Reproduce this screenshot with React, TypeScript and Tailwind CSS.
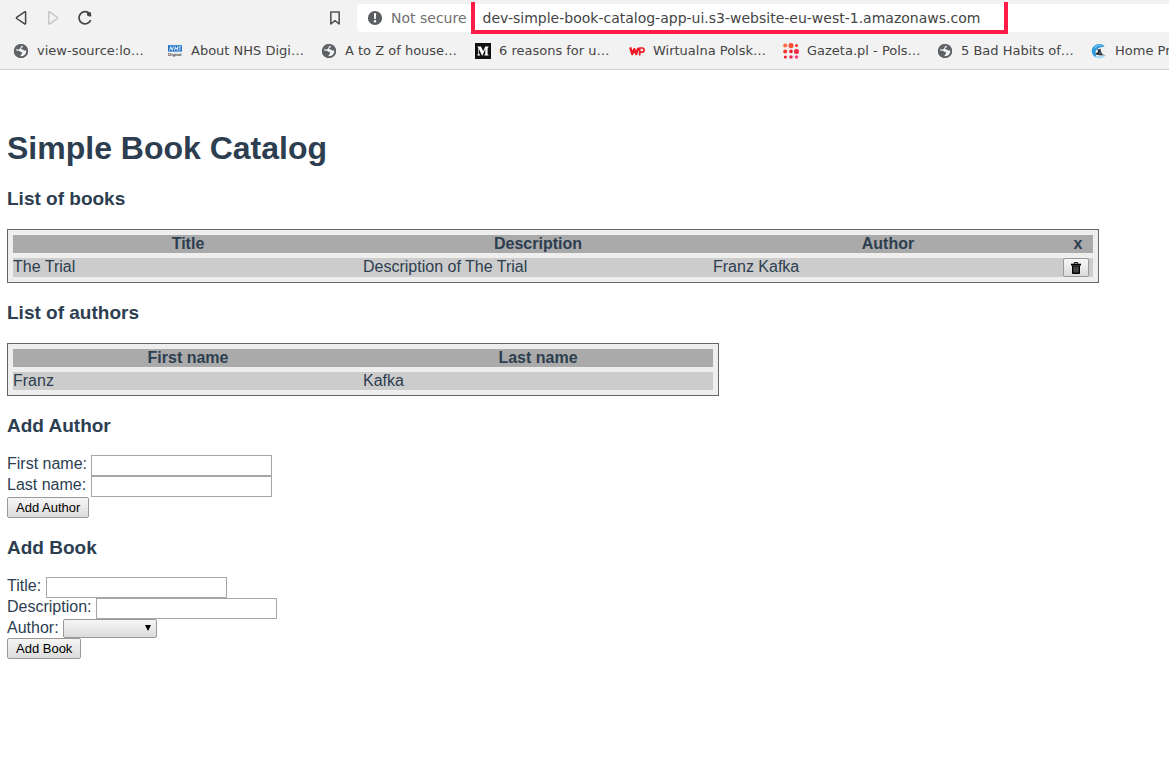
import type { ReactNode } from 'react';

function GlobeIcon() {
  return (
    <svg className="size-4 shrink-0" viewBox="0 0 16 16" aria-hidden="true">
      <circle cx="8" cy="8" r="7.1" fill="#5f6368" />
      <path
        d="M6.9 2.3 10.6 2.3C10.9 3 10 3.2 9.6 3.9 9.3 4.6 8.4 4.7 8 5.1 7.6 5.6 8.3 6.3 9.2 6.3 10.3 6.4 10.2 7.5 11.2 7.5 12.2 7.5 12.5 7 13.6 7.2 13.8 9.8 12.6 11.9 10.6 13 9.7 13.6 8.2 13.8 7.1 13.6 7 12.6 8.2 12.5 8.4 11.5 8.5 10.4 9.4 10.5 9.2 9.6 9 8.7 7.7 9 7 8.4 6.2 7.7 5.5 7.8 4.5 7.7 3.4 7.6 3.1 7.2 2.4 7.4 2.5 5 4.5 2.8 6.9 2.3Z"
        fill="#f2f2f2"
      />
      <path d="M3 5.4 5 3.2 7.4 2.6 8.4 3.2 7.1 5.2 5.7 6.4 3 6.6Z" fill="#5f6368" />
      <circle cx="8" cy="8" r="6.2" fill="none" stroke="#5f6368" strokeWidth="1.8" />
    </svg>
  );
}

function NhsIcon() {
  return (
    <svg className="size-4 shrink-0" viewBox="0 0 16 16" aria-hidden="true">
      <rect x="1" y="2.2" width="14" height="6.4" fill="#1f72c6" />
      <path d="M2.6 7.6 3.6 3.6 5.4 7.4 6.4 3.3M7.6 7.6 8.5 3.3M10 7.6 10.9 3.3M8.1 5.4H10.4M14.2 3.8C12.5 3.4 11.8 3.9 12.1 4.7 12.4 5.4 13.6 5.4 13.2 6.5 12.9 7.3 12 7.2 11.3 7" fill="none" stroke="#fff" strokeWidth=".9" />
      <text x="1" y="13" fontSize="4.4" fontWeight="700" fontFamily="Liberation Sans, sans-serif" fill="#444">Digital</text>
    </svg>
  );
}

function MediumIcon() {
  return (
    <svg className="size-4 shrink-0" viewBox="0 0 16 16" aria-hidden="true">
      <rect width="16" height="16" fill="#12100e" />
      <path d="M2.5 3.5H6L8.2 8.3 10.2 3.5H13.6V4.1L12.6 4.9V11.2L13.6 12V12.6H9.3V12L10.3 11.1V5.8L7.5 12.6H7L4 6V10.6L5.1 12V12.6H2.3V12L3.3 10.7V4.9L2.5 4.1Z" fill="#fff" />
    </svg>
  );
}

function WpIcon() {
  return (
    <svg className="size-4 shrink-0" viewBox="0 0 16 16" aria-hidden="true">
      <path d="M1.2 4.4 3.2 11 5.3 6.2 7.2 11 9.4 4.9" fill="none" stroke="#ee1c25" strokeWidth="2.4" strokeLinejoin="round" />
      <path d="M10.7 12.4V5H13.2C15.7 5 15.7 9.2 13.2 9.2H11.5" fill="none" stroke="#ee1c25" strokeWidth="1.7" />
    </svg>
  );
}

function GazetaIcon() {
  return (
    <svg className="size-4 shrink-0" viewBox="0 0 16 16" aria-hidden="true">
      <circle cx="2.2" cy="2.6" r="2" fill="#fb6a3c" />
      <circle cx="8" cy="2.6" r="2.6" fill="#f5502f" />
      <circle cx="13.5" cy="2.6" r="1.5" fill="#f52a2c" />
      <circle cx="2.2" cy="8.4" r="2" fill="#f5372c" />
      <circle cx="8" cy="8.4" r="1.8" fill="#e91c2d" />
      <circle cx="13.5" cy="8.4" r="2.5" fill="#f42743" />
      <circle cx="2.4" cy="14" r="1.5" fill="#ef1c32" />
      <circle cx="8" cy="14" r="1.8" fill="#f42a50" />
      <circle cx="13.5" cy="14" r="1.8" fill="#fb3f79" />
    </svg>
  );
}

function WaveIcon() {
  return (
    <svg className="size-4 shrink-0" viewBox="0 0 16 16" aria-hidden="true">
      <path d="M13.6 3.4C10.2-.8 1.2.6.8 7.8.8 11.6 3 14.3 6 14.6 4.2 11.6 4 8 6.4 5.8 8.4 4 10.8 4.2 13.6 3.4Z" fill="#2f9bdc" />
      <path d="M3.4 3.6C5.6 1.4 9.6 1 12 2.6 8.6 2.2 5.6 3.2 4 5.4Z" fill="#78c4ee" />
      <path d="M2.8 12.3C6 15.4 9.5 11.8 14.8 12.4 12.5 15.4 7 16.7 4 14Z" fill="#a8dcf5" />
      <path d="M6 5.4 7.8 6.6 9.4 5.4 9.8 8.6 11.6 11.4 14.4 12.2 8.2 12.3 5 11.6 4.3 10.4 6.4 9.6 7.2 8Z" fill="#222b35" />
      <path d="M8.6 8.6 9.8 11.2 8.2 10.8Z" fill="#8b969f" />
    </svg>
  );
}

function TrashIcon() {
  return (
    <svg className="h-3 w-[10px]" viewBox="0 0 10 12" aria-hidden="true">
      <path d="M3.3 1.8V.6H6.7V1.8" fill="none" stroke="#000" strokeWidth="1" />
      <path d="M0 1.7H10V3.6H0Z" fill="#000" />
      <path d="M1 3.4H9V11Q9 12 8 12H2Q1 12 1 11Z" fill="#000" />
      <path d="M3.1 4.5V10.6M5 4.5V10.6M6.9 4.5V10.6" stroke="#a0a0a0" strokeWidth=".8" />
    </svg>
  );
}

const bookmarks: { label: string; icon: ReactNode }[] = [
  { label: 'view-source:lo…', icon: <GlobeIcon /> },
  { label: 'About NHS Digi…', icon: <NhsIcon /> },
  { label: 'A to Z of house…', icon: <GlobeIcon /> },
  { label: '6 reasons for u…', icon: <MediumIcon /> },
  { label: 'Wirtualna Polsk…', icon: <WpIcon /> },
  { label: 'Gazeta.pl - Pols…', icon: <GazetaIcon /> },
  { label: '5 Bad Habits of…', icon: <GlobeIcon /> },
  { label: 'Home Pr…', icon: <WaveIcon /> },
];

function BrowserBar() {
  return (
    <header className="overflow-hidden border-b border-[#d0d0d0] bg-[#f2f2f2] pt-1 font-['DejaVu_Sans',sans-serif] text-[#444]">
      <div className="flex h-7 items-center">
        <nav aria-label="History" className="flex items-center gap-4 pl-[13px]">
          <button type="button" aria-label="Back">
            <svg className="size-4" viewBox="0 0 16 16" fill="none" stroke="#444" strokeWidth="1.5" strokeLinejoin="round">
              <path d="M12.6 2.2V13.6Q12.4 14.3 11.6 13.9L3.7 8.5Q3.1 7.9 3.7 7.3L11.6 1.9Q12.4 1.5 12.6 2.2Z" />
            </svg>
          </button>
          <button type="button" aria-label="Forward">
            <svg className="size-4" viewBox="0 0 16 16" fill="none" stroke="#c4c4c4" strokeWidth="1.4" strokeLinejoin="round">
              <path d="M3.7 2.2V13.6Q3.9 14.3 4.7 13.9L12.3 8.5Q12.9 7.9 12.3 7.3L4.7 1.9Q3.9 1.5 3.7 2.2Z" />
            </svg>
          </button>
          <button type="button" aria-label="Reload">
            <svg className="size-4" viewBox="0 0 16 16" fill="none" stroke="#444" strokeWidth="1.7">
              <path d="M12.5 3.5A6.1 6.1 0 1 0 13.7 10.2" />
              <path d="M9.8 3.4Q11.5 1.6 14 2.6L14.3 6.2Q12.5 7 10.4 5.8Z" fill="#444" stroke="none" />
            </svg>
          </button>
        </nav>
        <button type="button" aria-label="Bookmark this page" className="ml-[234px]">
          <svg className="size-4" viewBox="0 0 16 16" fill="none" stroke="#555" strokeWidth="1.6" strokeLinejoin="round">
            <path d="M3.8 2H12.2V14L8 10.6 3.8 14Z" />
          </svg>
        </button>
        <div className="ml-[14px] flex h-7 flex-1 items-center rounded-l-sm bg-white pl-[10px] text-sm whitespace-nowrap">
          <svg className="size-4 shrink-0" viewBox="0 0 16 16" aria-hidden="true">
            <circle cx="8" cy="8" r="7.1" fill="#5a5d61" />
            <path d="M6.9 3.3H9.1L8.8 9H7.2Z" fill="#fff" />
            <circle cx="8" cy="11.3" r="1.2" fill="#fff" />
          </svg>
          <span className="ml-2 text-[#707070]">Not secure</span>
          <div className="relative ml-4">
            <span>dev-simple-book-catalog-app-ui.s3-website-eu-west-1.amazonaws.com</span>
            <div className="pointer-events-none absolute -top-1.5 -right-7 -left-3 h-8 border-4 border-t-0 border-[#ff1c49]" />
          </div>
        </div>
      </div>
      <nav aria-label="Bookmarks" className="flex h-[37px] items-center pl-[13px] text-[13px] whitespace-nowrap">
        {bookmarks.map((b) => (
          <a key={b.label} href="#" className="flex w-[154px] shrink-0 items-center gap-2">
            {b.icon}
            {b.label}
          </a>
        ))}
      </nav>
    </header>
  );
}

const tableStyle =
  'w-full table-fixed border-separate border-spacing-x-0 border-spacing-y-[5px] border border-[#666] bg-[#eee] px-[5px]';

function Cell({ children }: { children: ReactNode }) {
  return <td className="bg-[#ccc] p-0 align-top">{children}</td>;
}

function HeadCell({ children }: { children: ReactNode }) {
  return <th className="bg-[#aaa] p-0 font-bold">{children}</th>;
}

function SectionTitle({ children }: { children: ReactNode }) {
  return <h3 className="my-[19px] text-[19px] leading-[21px] font-bold">{children}</h3>;
}

function TextField({ id, label }: { id: string; label: string }) {
  return (
    <div className="h-[21px]">
      <label htmlFor={id}>{label}</label>{' '}
      <input id={id} type="text" className="h-[21px] w-[181px] border border-[#a6a6a6] bg-white px-0.5 align-top text-[13px]" />
    </div>
  );
}

const buttonStyle =
  'rounded-[2px] border border-[#999] bg-linear-to-b from-[#f6f6f6] to-[#dcdcdc] text-[13px] text-black';

export default function App() {
  return (
    <div className="min-h-screen bg-white">
      <BrowserBar />
      <main className="px-[7px] pt-[60px] pb-8 font-['Liberation_Sans',Arial,sans-serif] text-base leading-[18px] text-[#2c3e50]">
        <h1 className="mb-[21px] text-[32px] leading-[37px] font-bold">Simple Book Catalog</h1>

        <SectionTitle>List of books</SectionTitle>
        <div className="mt-5 max-w-[1092px]">
          <table className={tableStyle}>
            <colgroup>
              <col />
              <col />
              <col />
              <col className="w-[30px]" />
            </colgroup>
            <thead>
              <tr>
                <HeadCell>Title</HeadCell>
                <HeadCell>Description</HeadCell>
                <HeadCell>Author</HeadCell>
                <HeadCell>x</HeadCell>
              </tr>
            </thead>
            <tbody>
              <tr>
                <Cell>The Trial</Cell>
                <Cell>Description of The Trial</Cell>
                <Cell>Franz Kafka</Cell>
                <Cell>
                  <button type="button" aria-label="Delete The Trial" className={`${buttonStyle} flex h-[19px] w-[26px] items-center justify-center`}>
                    <TrashIcon />
                  </button>
                </Cell>
              </tr>
            </tbody>
          </table>
        </div>

        <SectionTitle>List of authors</SectionTitle>
        <div className="mt-5 max-w-[712px]">
          <table className={tableStyle}>
            <thead>
              <tr>
                <HeadCell>First name</HeadCell>
                <HeadCell>Last name</HeadCell>
              </tr>
            </thead>
            <tbody>
              <tr>
                <Cell>Franz</Cell>
                <Cell>Kafka</Cell>
              </tr>
            </tbody>
          </table>
        </div>

        <SectionTitle>Add Author</SectionTitle>
        <form onSubmit={(e) => e.preventDefault()}>
          <TextField id="first-name" label="First name:" />
          <TextField id="last-name" label="Last name:" />
          <button type="submit" className={`${buttonStyle} block h-[21px] px-2`}>Add Author</button>
        </form>

        <SectionTitle>Add Book</SectionTitle>
        <form onSubmit={(e) => e.preventDefault()}>
          <TextField id="title" label="Title:" />
          <TextField id="description" label="Description:" />
          <div className="h-[19px]">
            <label htmlFor="author">Author:</label>{' '}
            <div className="relative inline-block align-top">
              <select id="author" defaultValue="" className={`${buttonStyle} block h-[19px] w-[94px] appearance-none`}>
                <option value=""></option>
                <option value="kafka">Franz Kafka</option>
              </select>
              <svg className="pointer-events-none absolute top-1.5 right-1.5 h-1.5 w-1.5" viewBox="0 0 6 6" aria-hidden="true">
                <path d="M0 0H6L3 6Z" fill="#000" />
              </svg>
            </div>
          </div>
          <button type="submit" className={`${buttonStyle} block h-[21px] px-2`}>Add Book</button>
        </form>
      </main>
    </div>
  );
}
